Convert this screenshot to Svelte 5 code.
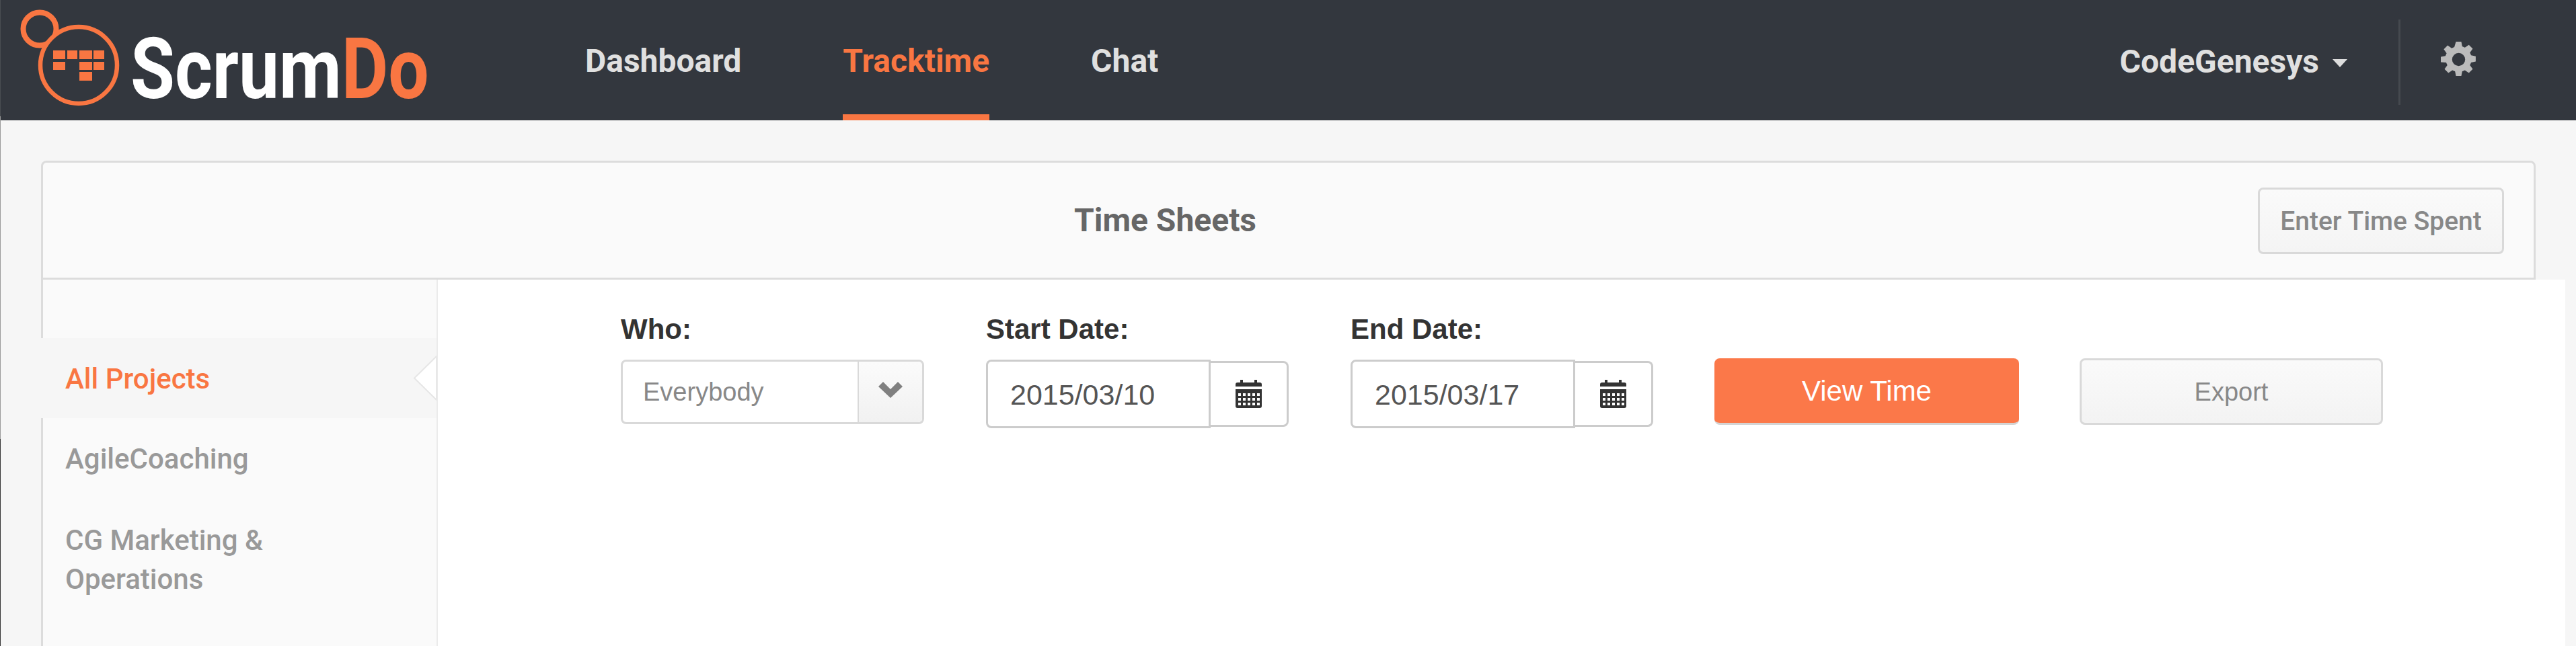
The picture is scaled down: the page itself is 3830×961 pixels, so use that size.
<script>
    // sidebar projects, the first one is selected
    const projects = ["All Projects", "AgileCoaching", "CG Marketing & Operations"];
    const navLinks = ["Dashboard", "Tracktime", "Chat"];
    const activeLink = "Tracktime";
    const dates = [
        { label: "Start Date:", value: "2015/03/10" },
        { label: "End Date:", value: "2015/03/17" },
    ];

    // logo blocks: [x, y, w, h]
    const blocks = [
        [79, 75, 18, 13], [100, 75, 15, 13], [118, 75, 19, 13], [139, 75, 16, 13],
        [79, 92, 18, 12], [118, 92, 19, 12], [139, 92, 16, 12],
        [118, 107, 19, 13],
    ];
</script>

<div class="edge"></div>

<header class="topbar">
    <div class="brand">
        <svg class="logo" width="180" height="179" viewBox="0 0 180 179">
            <circle cx="59" cy="43" r="24.5" fill="none" stroke="#f97642" stroke-width="8" />
            <circle cx="117" cy="97" r="57" fill="#33373e" stroke="#f97642" stroke-width="6.5" />
            {#each blocks as b}
                <rect x={b[0]} y={b[1]} width={b[2]} height={b[3]} fill="#f97642" />
            {/each}
        </svg>
        <span class="wordmark">Scrum<span class="do">Do</span></span>
    </div>
    <nav class="nav">
        {#each navLinks as link}
            <a href="#top" class="nav-link" class:active={link === activeLink}>{link}</a>
        {/each}
    </nav>
    <div class="account">
        <span class="user">CodeGenesys</span>
        <span class="caret"></span>
    </div>
    <div class="settings">
        <svg width="53" height="53" viewBox="0 0 24 24">
            <path
                fill="#bbbbbb"
                fill-rule="evenodd"
                d="M10.2 0h3.6l.6 3.2 1.8.8 2.7-1.9 2.6 2.6-1.9 2.7.8 1.8 3.1.6v3.6l-3.1.6-.8 1.8 1.9 2.7-2.6 2.6-2.7-1.9-1.8.8-.6 3.1h-3.6l-.6-3.1-1.8-.8-2.7 1.9-2.6-2.6 1.9-2.7-.8-1.8L0 13.8v-3.6l3.1-.6.8-1.8L2 5.1l2.6-2.6 2.7 1.9 1.8-.8zM12 7.6a4.4 4.4 0 1 0 0 8.8 4.4 4.4 0 0 0 0-8.8z"
            />
        </svg>
    </div>
</header>

<main class="page">
    <div class="panel-head">
        <h1 class="title">Time Sheets</h1>
        <button class="enter-btn">Enter Time Spent</button>
    </div>
    <div class="panel-body">
        <aside class="sidebar">
            {#each projects as project, i}
                <div class="project" class:selected={i === 0}>
                    {project}
                    {#if i === 0}
                        <svg class="notch" width="35" height="67" viewBox="0 0 35 67">
                            <path d="M35 1 2 33.5 35 66z" fill="#ffffff" stroke="#e6e6e6" stroke-width="2" />
                        </svg>
                    {/if}
                </div>
            {/each}
        </aside>
        <section class="content">
            <div class="field who">
                <span class="label">Who:</span>
                <div class="select">
                    <span class="select-value">Everybody</span>
                    <span class="select-arrow">
                        <svg width="36" height="24" viewBox="0 0 36 24">
                            <path d="M0 7 7 0l11 11L29 0l7 7-18 17z" fill="#808080" />
                        </svg>
                    </span>
                </div>
            </div>
            {#each dates as d}
                <div class="field date">
                    <span class="label">{d.label}</span>
                    <div class="date-group">
                        <input class="date-input" type="text" value={d.value} readonly />
                        <span class="date-addon">
                            <svg width="39" height="42" viewBox="0 0 39 42">
                                <path
                                    fill="#333333"
                                    d="M7 0h4v4h17V0h4v4h4a3 3 0 0 1 3 3v3H0V7a3 3 0 0 1 3-3h4z"
                                />
                                <path
                                    fill="#333333"
                                    fill-rule="evenodd"
                                    d="M0 14h39v25a3 3 0 0 1-3 3H3a3 3 0 0 1-3-3zM4 20v4h4v-4zm7 0v4h4v-4zm7 0v4h4v-4zm7 0v4h4v-4zm7 0v4h4v-4zM4 27v4h4v-4zm7 0v4h4v-4zm7 0v4h4v-4zm7 0v4h4v-4zm7 0v4h4v-4zM4 34v4h4v-4zm7 0v4h4v-4zm7 0v4h4v-4zm7 0v4h4v-4zm7 0v4h4v-4z"
                                />
                            </svg>
                        </span>
                    </div>
                </div>
            {/each}
            <button class="view-btn">View Time</button>
            <button class="export-btn">Export</button>
        </section>
    </div>
</main>

<style>
    :global(body) {
        margin: 0;
        background: #f6f6f6;
        overflow: hidden;
    }

    /* hairline down the left side of the window */
    .edge {
        position: absolute;
        top: 0;
        left: 0;
        width: 1px;
        height: 961px;
        background: linear-gradient(#4a4d52 0 18%, #9a9a9a 18% 68%, #333333 68%);
    }

    /* top bar */
    .topbar {
        display: flex;
        align-items: stretch;
        height: 179px;
        background: #33373e;
        font-family: Roboto, sans-serif;
    }

    .brand {
        display: flex;
        width: 870px;
        flex: none;
    }

    .logo {
        flex: none;
    }

    .wordmark {
        display: block;
        margin: 29px 0 0 14px;
        font-size: 126px;
        line-height: 148px;
        font-weight: 700;
        color: #ffffff;
        transform: scaleX(0.85);
        transform-origin: left center;
        white-space: nowrap;
    }

    .do {
        color: #f97642;
    }

    .nav {
        display: flex;
        gap: 151px;
        flex: 1;
    }

    .nav-link {
        display: block;
        height: 170px;
        line-height: 182px;
        font-size: 48px;
        font-weight: 700;
        color: #e0e0e0;
        text-decoration: none;
    }

    .nav-link.active {
        color: #f97642;
        border-bottom: 9px solid #f97642;
    }

    .account {
        display: flex;
        align-items: center;
        padding-top: 3px;
        margin-right: 76px;
        font-size: 48px;
        font-weight: 700;
        color: #e0e0e0;
    }

    .caret {
        width: 0;
        height: 0;
        margin: 6px 0 0 20px;
        border-left: 11.5px solid transparent;
        border-right: 11.5px solid transparent;
        border-top: 12px solid #dddddd;
    }

    .settings {
        align-self: flex-start;
        box-sizing: border-box;
        width: 264px;
        height: 127px;
        margin-top: 29px;
        padding: 33px 0 0 60px;
        border-left: 3px solid #45494f;
    }

    /* panel */
    .page {
        padding-top: 60px;
    }

    .panel-head {
        display: flex;
        align-items: center;
        box-sizing: border-box;
        height: 177px;
        margin: 0 60px 0 61px;
        padding: 0 44px;
        background: #fafafa;
        border: 3px solid #dcdcdc;
        border-radius: 8px 8px 0 0;
        font-family: Roboto, sans-serif;
    }

    .title {
        flex: 1;
        margin: 0;
        text-align: center;
        font-size: 48px;
        font-weight: 700;
        color: #666666;
    }

    .enter-btn {
        flex: none;
        width: 366px;
        height: 99px;
        margin-top: 2px;
        padding: 0;
        background: linear-gradient(#fafafa, #f4f4f4);
        border: 3px solid #d9d9d9;
        border-radius: 8px;
        font-family: Roboto, sans-serif;
        font-size: 39px;
        font-weight: 500;
        color: #888888;
    }

    .panel-body {
        display: flex;
        height: 545px;
        margin: 0 16px 0 61px;
    }

    .sidebar {
        box-sizing: border-box;
        width: 590px;
        flex: none;
        padding-top: 87px;
        background: #fafafa;
        border-left: 3px solid #dcdcdc;
        border-right: 2px solid #ebebeb;
        font-family: Roboto, sans-serif;
    }

    .project {
        box-sizing: border-box;
        padding: 32px 140px 31px 33px;
        font-size: 42px;
        line-height: 58px;
        font-weight: 500;
        color: #999999;
    }

    .project.selected {
        position: relative;
        margin-left: -3px;
        padding-left: 36px;
        height: 119px;
        background: #f6f6f6;
        color: #f97642;
    }

    /* notch pointing at the selected project */
    .notch {
        position: absolute;
        top: 26px;
        right: 0;
    }

    .content {
        flex: 1;
        display: flex;
        align-items: flex-start;
        padding: 47px 0 0 272px;
        background: #ffffff;
        font-family: "Liberation Sans", Arial, sans-serif;
    }

    .field {
        display: flex;
        flex-direction: column;
        flex: none;
    }

    .who {
        width: 451px;
        margin-right: 92px;
    }

    .date {
        width: 450px;
        margin-right: 92px;
    }

    .label {
        height: 72px;
        font-size: 42px;
        line-height: 54px;
        font-weight: 700;
        color: #333333;
    }

    .select {
        display: flex;
        box-sizing: border-box;
        height: 96px;
        background: #ffffff;
        border: 3px solid #d9d9d9;
        border-radius: 8px;
    }

    .select-value {
        flex: 1;
        padding-left: 30px;
        font-size: 38px;
        line-height: 90px;
        color: #888888;
    }

    .select-arrow {
        display: flex;
        align-items: center;
        justify-content: center;
        box-sizing: border-box;
        width: 96px;
        padding-bottom: 6px;
        background: linear-gradient(#fbfbfb, #f1f1f1);
        border-left: 2px solid #d9d9d9;
        border-radius: 0 6px 6px 0;
    }

    .date-group {
        display: flex;
        align-items: center;
    }

    .date-input {
        box-sizing: border-box;
        width: 334px;
        height: 102px;
        padding: 2px 0 0 33px;
        margin: 0;
        background: #ffffff;
        border: 3px solid #cccccc;
        border-radius: 8px 0 0 8px;
        outline: none;
        font-family: "Liberation Sans", Arial, sans-serif;
        font-size: 43px;
        color: #555555;
    }

    .date-addon {
        display: flex;
        align-items: center;
        justify-content: center;
        box-sizing: border-box;
        width: 116px;
        height: 98px;
        background: #ffffff;
        border: 3px solid #cccccc;
        border-left: none;
        border-radius: 0 8px 8px 0;
    }

    .view-btn,
    .export-btn {
        flex: none;
        box-sizing: border-box;
        height: 99px;
        margin-top: 70px;
        padding: 2px 0 0;
        border-radius: 8px;
        font-family: "Liberation Sans", Arial, sans-serif;
    }

    .view-btn {
        width: 453px;
        margin-left: -1px;
        margin-right: 90px;
        background: #fb7849;
        border: none;
        border-bottom: 3px solid #d4d4d4;
        font-size: 42px;
        color: #ffffff;
    }

    .export-btn {
        width: 451px;
        background: linear-gradient(#fafafa, #f3f3f3);
        border: 3px solid #d9d9d9;
        font-size: 38px;
        color: #888888;
    }
</style>
